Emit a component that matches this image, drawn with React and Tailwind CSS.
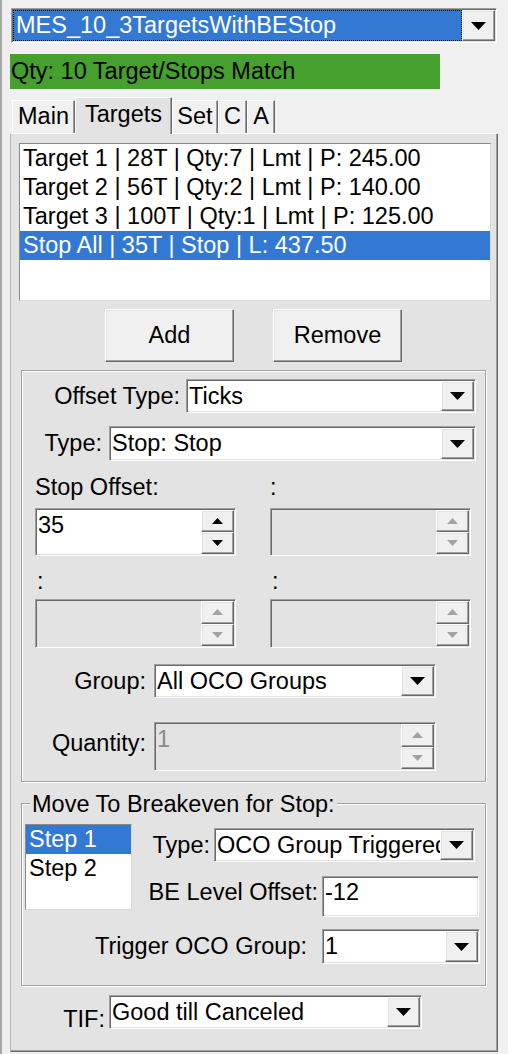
import React from "react";

// Classic 3D edges used by the Win32-style controls
const sunken =
  "border border-t-[#a0a0a0] border-l-[#a0a0a0] border-r-white border-b-white shadow-[inset_1px_1px_0_#696969,inset_-1px_-1px_0_#e3e3e3]";
const raised =
  "bg-[#f0f0f0] border border-t-white border-l-white border-r-[#696969] border-b-[#696969] shadow-[inset_-1px_-1px_0_#a0a0a0,inset_1px_1px_0_#e3e3e3]";
const etched =
  "border border-[#a0a0a0] shadow-[inset_1px_1px_0_#ffffff,1px_1px_0_#ffffff]";

function Tri({ up = false, small = false, grey = false }) {
  const w = small ? 11 : 15;
  const h = small ? 6 : 8;
  const pts = up ? `0,${h} ${w},${h} ${w / 2},0` : `0,0 ${w},0 ${w / 2},${h}`;
  return (
    <svg width={w} height={h} viewBox={`0 0 ${w} ${h}`} className="block">
      <polygon points={pts} fill={grey ? "#a3a3a3" : "#000000"} />
    </svg>
  );
}

function DropButton() {
  return (
    <div className={`${raised} w-[33px] shrink-0 flex items-center justify-center`}>
      <Tri />
    </div>
  );
}

function Combo({ value, className = "" }) {
  return (
    <div className={`${sunken} bg-white flex p-[1px] ${className}`}>
      <div className="flex-1 min-w-0 overflow-hidden whitespace-nowrap pl-[1px] flex items-center">
        {value}
      </div>
      <DropButton />
    </div>
  );
}

function Spinner({ value = "", disabled = false, className = "" }) {
  return (
    <div
      className={`${sunken} ${disabled ? "bg-[#e3e3e3]" : "bg-white"} flex p-[1px] ${className}`}
    >
      <div
        className={`flex-1 min-w-0 pl-[1px] pt-[2px] ${disabled ? "text-[#8a8a8a]" : ""}`}
      >
        {value}
      </div>
      <div className="w-[33px] shrink-0 flex flex-col">
        <div className={`${raised} flex-1 flex items-center justify-center`}>
          <Tri up small grey={disabled} />
        </div>
        <div className={`${raised} flex-1 flex items-center justify-center`}>
          <Tri small grey={disabled} />
        </div>
      </div>
    </div>
  );
}

function Tab({ label, selected = false, className = "" }) {
  if (selected) {
    return (
      <div
        className={`relative z-10 -mb-px h-[37px] bg-[#e3e3e3] border-t border-l border-r border-t-white border-l-white border-r-[#696969] shadow-[inset_-1px_0_0_#a0a0a0] flex justify-center pt-[3px] ${className}`}
      >
        {label}
      </div>
    );
  }
  return (
    <div
      className={`h-[33px] bg-[#f0f0f0] border-t border-l border-r border-t-white border-l-white border-r-[#696969] shadow-[inset_-1px_0_0_#a0a0a0] flex justify-center pt-[2px] ${className}`}
    >
      {label}
    </div>
  );
}

const targets = [
  "Target 1 | 28T | Qty:7 | Lmt | P: 245.00",
  "Target 2 | 56T | Qty:2 | Lmt | P: 140.00",
  "Target 3 | 100T | Qty:1 | Lmt | P: 125.00",
  "Stop All | 35T | Stop | L: 437.50",
];

export default function App() {
  return (
    <div className="w-[508px] h-[1054px] overflow-hidden bg-[#f0f0f0] shadow-[inset_2px_0_0_#a8a8a8] font-['Liberation_Sans',Arial,sans-serif] text-[23.5px] leading-[27px] text-black flex flex-col">
      {/* strategy template picker */}
      <div className={`mt-[8px] ml-[11px] w-[486px] h-[35px] bg-white flex p-[1px] ${sunken}`}>
        <div className="flex-1 min-w-0 bg-[#3379d3] text-white border border-dotted border-black flex items-center pl-[2px] whitespace-nowrap">
          MES_10_3TargetsWithBEStop
        </div>
        <DropButton />
      </div>

      {/* quantity status */}
      <div className="mt-[11px] ml-[10px] w-[430px] h-[35px] bg-[#46a02e] flex items-center pl-[1px]">
        Qty: 10 Target/Stops Match
      </div>

      {/* tab strip */}
      <div className="mt-[8px] ml-[12px] h-[36px] flex items-end">
        <Tab label="Main" className="w-[63px]" />
        <Tab label="Targets" selected className="w-[97px]" />
        <Tab label="Set" className="w-[46px]" />
        <Tab label="C" className="w-[29px]" />
        <Tab label="A" className="w-[28px]" />
      </div>

      {/* tab page */}
      <div className="ml-[10px] w-[488px] h-[919px] bg-[#e3e3e3] border border-t-white border-l-[#b5b5b5] border-r-[#696969] border-b-[#696969] shadow-[inset_-1px_-1px_0_#a0a0a0] flex flex-col">
        {/* target list */}
        <div className="mt-[9px] ml-[8px] w-[472px] h-[158px] bg-white border border-t-[#8a8a8a] border-l-[#8a8a8a] border-r-[#dadada] border-b-[#dadada] flex flex-col">
          {targets.map((t, i) => (
            <div
              key={t}
              className={`h-[29px] leading-[29px] pl-[3px] whitespace-nowrap ${
                i === 3 ? "bg-[#3379d3] text-white" : ""
              }`}
            >
              {t}
            </div>
          ))}
        </div>

        {/* add / remove */}
        <div className="mt-[8px] flex">
          <button className={`${raised} ml-[94px] w-[129px] h-[53px] flex items-center justify-center`}>
            Add
          </button>
          <button className={`${raised} ml-[39px] w-[129px] h-[53px] flex items-center justify-center`}>
            Remove
          </button>
        </div>

        {/* order settings */}
        <div className={`${etched} mt-[8px] ml-[10px] w-[465px] h-[412px] flex flex-col`}>
          <div className="mt-[8px] mr-[9px] flex justify-end items-center gap-[6px]">
            <span>Offset Type:</span>
            <Combo value="Ticks" className="w-[290px] h-[34px]" />
          </div>
          <div className="mt-[13px] mr-[9px] flex justify-end items-center gap-[7px]">
            <span>Type:</span>
            <Combo value="Stop: Stop" className="w-[367px] h-[35px]" />
          </div>

          <div className="mt-[13px] ml-[13px] flex gap-[34px]">
            <span className="w-[201px]">Stop Offset:</span>
            <span className="w-[201px]">:</span>
          </div>
          <div className="mt-[7px] ml-[13px] flex gap-[34px]">
            <Spinner value="35" className="w-[201px] h-[48px]" />
            <Spinner disabled className="w-[201px] h-[48px]" />
          </div>
          <div className="mt-[12px] ml-[13px] flex gap-[34px]">
            <span className="w-[201px] pl-[2px]">:</span>
            <span className="w-[201px] pl-[2px]">:</span>
          </div>
          <div className="mt-[4px] ml-[13px] flex gap-[34px]">
            <Spinner disabled className="w-[201px] h-[49px]" />
            <Spinner disabled className="w-[201px] h-[49px]" />
          </div>

          <div className="mt-[16px] flex items-center">
            <span className="w-[124px] text-right">Group:</span>
            <Combo value="All OCO Groups" className="ml-[8px] w-[282px] h-[34px]" />
          </div>
          <div className="mt-[24px] flex items-start">
            <span className="w-[124px] text-right mt-[8px]">Quantity:</span>
            <Spinner value="1" disabled className="ml-[8px] w-[282px] h-[49px]" />
          </div>
        </div>

        {/* breakeven steps */}
        <div className={`${etched} mt-[21px] ml-[10px] w-[465px] h-[183px] flex flex-col`}>
          <span className="-mt-[13px] ml-[8px] self-start px-[2px] bg-[#e3e3e3]">
            Move To Breakeven for Stop:
          </span>
          <div className="mt-[6px] flex">
            <div className="ml-[3px] w-[107px] h-[86px] bg-white border border-t-[#8a8a8a] border-l-[#8a8a8a] border-r-[#dadada] border-b-[#dadada] flex flex-col">
              <div className="h-[29px] leading-[29px] pl-[3px] bg-[#3379d3] text-white">Step 1</div>
              <div className="h-[29px] leading-[29px] pl-[3px]">Step 2</div>
            </div>
            <div className="flex-1 flex flex-col">
              <div className="mt-[4px] mr-[10px] flex justify-end items-center gap-[4px]">
                <span>Type:</span>
                <Combo value="OCO Group Triggered" className="w-[261px] h-[34px]" />
              </div>
              <div className="mt-[14px] mr-[6px] flex justify-end items-start gap-[4px]">
                <span className="mt-[3px]">BE Level Offset:</span>
                <div className={`${sunken} bg-white w-[157px] h-[41px] pl-[2px] pt-[2px]`}>-12</div>
              </div>
            </div>
          </div>
          <div className="mt-[12px] mr-[5px] flex justify-end items-center gap-[15px]">
            <span>Trigger OCO Group:</span>
            <Combo value="1" className="w-[158px] h-[35px]" />
          </div>
        </div>

        {/* time in force */}
        <div className="mt-[9px] flex items-start">
          <span className="w-[94px] text-right mt-[11px]">TIF:</span>
          <Combo value="Good till Canceled" className="ml-[4px] w-[313px] h-[34px]" />
        </div>
      </div>
    </div>
  );
}
